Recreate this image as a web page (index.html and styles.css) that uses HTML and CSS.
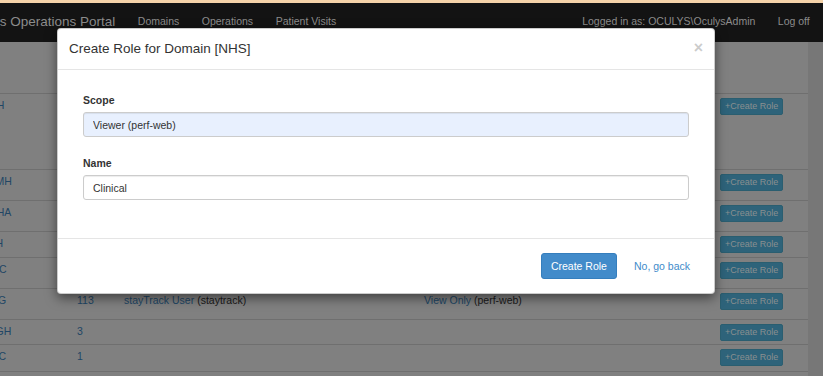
FILE: index.html
```html
<!DOCTYPE html>
<html lang="en">
<head>
    <meta charset="UTF-8">
    <meta name="viewport" content="width=device-width, initial-scale=1.0">
    <title>Oculys Operations Portal - Domains</title>
    <link rel="stylesheet" href="styles.css">
</head>
<body>

    <div class="navbar">
        <div class="navbar-inner">
            <a class="brand" href="#">Oculys Operations Portal</a>
            <nav class="nav">
                <a href="#">Domains</a>
                <a href="#">Operations</a>
                <a href="#">Patient Visits</a>
            </nav>
            <div class="nav-right">
                <span class="nav-text">Logged in as: OCULYS\OculysAdmin</span>
                <a href="#">Log off</a>
            </div>
        </div>
    </div>

    <!-- page behind the dialog, drawn in its dimmed colours -->
    <div class="content">
        <table class="domains">
            <thead>
                <tr>
                    <th class="c-name"></th>
                    <th class="c-users">Users</th>
                    <th class="c-roles">Roles</th>
                    <th class="c-scopes">Scopes</th>
                    <th class="c-act"></th>
                </tr>
            </thead>
            <tbody>
                <tr class="tall">
                    <td><a href="#">SMH</a></td>
                    <td><a href="#">27</a></td>
                    <td><a href="#">Clinical User</a> (perf-web)<br><a href="#">Bed Manager</a> (perf-web)<br><a href="#">stayTrack User</a> (staytrack)</td>
                    <td><a href="#">Viewer</a> (perf-web)<br><a href="#">View Only</a> (perf-web)</td>
                    <td><button class="btn-info">+Create Role</button></td>
                </tr>
                <tr>
                    <td><a href="#">CAMH</a></td>
                    <td><a href="#">8</a></td>
                    <td><a href="#">Clinical User</a> (perf-web)</td>
                    <td><a href="#">Viewer</a> (perf-web)</td>
                    <td><button class="btn-info">+Create Role</button></td>
                </tr>
                <tr>
                    <td><a href="#">MSHA</a></td>
                    <td><a href="#">12</a></td>
                    <td><a href="#">Clinical User</a> (perf-web)</td>
                    <td><a href="#">Viewer</a> (perf-web)</td>
                    <td><button class="btn-info">+Create Role</button></td>
                </tr>
                <tr class="short">
                    <td><a href="#">PRH</a></td>
                    <td></td>
                    <td></td>
                    <td></td>
                    <td><button class="btn-info">+Create Role</button></td>
                </tr>
                <tr>
                    <td><a href="#">HHIC</a></td>
                    <td><a href="#">5</a></td>
                    <td><a href="#">Clinical User</a> (perf-web)</td>
                    <td><a href="#">Viewer</a> (perf-web)</td>
                    <td><button class="btn-info">+Create Role</button></td>
                </tr>
                <tr>
                    <td><a href="#">WSG</a></td>
                    <td><a href="#">113</a></td>
                    <td><a href="#">stayTrack User</a> (staytrack)</td>
                    <td><a href="#">View Only</a> (perf-web)</td>
                    <td><button class="btn-info">+Create Role</button></td>
                </tr>
                <tr class="shorter">
                    <td><a href="#">NYGH</a></td>
                    <td><a href="#">3</a></td>
                    <td></td>
                    <td></td>
                    <td><button class="btn-info">+Create Role</button></td>
                </tr>
                <tr class="mid">
                    <td><a href="#">WHC</a></td>
                    <td><a href="#">1</a></td>
                    <td></td>
                    <td></td>
                    <td><button class="btn-info">+Create Role</button></td>
                </tr>
                <tr>
                    <td></td>
                    <td></td>
                    <td></td>
                    <td></td>
                    <td><button class="btn-info">+Create Role</button></td>
                </tr>
            </tbody>
        </table>
    </div>

    <div class="modal">
        <div class="modal-header">
            <h4 class="modal-title">Create Role for Domain [NHS]</h4>
            <button class="close">&times;</button>
        </div>
        <div class="modal-body">
            <div class="form-group">
                <label for="scope">Scope</label>
                <input id="scope" class="form-control autofilled" value="Viewer (perf-web)">
            </div>
            <div class="form-group">
                <label for="name">Name</label>
                <input id="name" class="form-control" value="Clinical">
            </div>
        </div>
        <div class="modal-footer">
            <button class="btn-primary">Create Role</button>
            <a href="#" class="btn-link">No, go back</a>
        </div>
    </div>

</body>
</html>
```

FILE: styles.css
```css
body {
    margin: 0;
    font-family: "Liberation Sans", Arial, sans-serif;
    font-size: 10.5px;
    line-height: 15px;
    color: #1a1a1a;
    background-color: #777;
    overflow: hidden;
}
a {
    color: #214665;
    text-decoration: none;
}

/* top bar */
.navbar {
    height: 39px;
    border-top: 3px solid #f5d3a9;
    background-color: #131313;
}
.navbar-inner {
    display: flex;
    margin-left: -46px;
    padding-right: 2px;
}
.navbar a,
.nav-text {
    color: #8c8c8c;
    padding: 11px 11.25px 0;
}
.navbar .brand {
    font-size: 13.5px;
}
.nav {
    display: flex;
}
.nav-right {
    display: flex;
    margin-left: auto;
}

/* table behind the dialog (colours already dimmed) */
.content {
    margin-left: -46px;
    width: 831px;
    height: 334px;
    overflow: hidden;
    padding-left: 23px;
    background-color: #808080;
}
.domains {
    width: 831px;
    border-spacing: 0;
    table-layout: fixed;
}
.domains thead tr { height: 51px; }
.domains th {
    text-align: left;
    vertical-align: bottom;
    padding: 0 4px 8px;
}
.c-name { width: 88px; }
.c-users { width: 39px; }
.c-roles { width: 292px; }
.c-scopes { width: 288px; }
.c-act { width: 84px; }
.domains td {
    border-top: 1px solid #6f6f6f;
    padding: 4px 4px 0;
    vertical-align: top;
    white-space: nowrap;
    overflow: hidden;
}
.domains tbody tr { height: 31px; }
.domains tr.tall { height: 76px; }
.domains tr.short { height: 26px; }
.domains tr.shorter { height: 25px; }
.domains tr.mid { height: 27px; }
.btn-info {
    font-family: inherit;
    font-size: 9px;
    line-height: 13px;
    padding: 1px 4px;
    color: #8a8f90;
    background-color: #2e637a;
    border: 1px solid #2a5e70;
    border-radius: 2px;
}

/* dialog */
.modal {
    position: absolute;
    left: 57px;
    top: 28px;
    width: 658px;
    box-sizing: border-box;
    background-color: #fff;
    border: 1px solid rgba(0,0,0,0.2);
    border-radius: 4px;
    box-shadow: 0 4px 12px rgba(0,0,0,0.5);
}
.modal-header {
    display: flex;
    align-items: flex-start;
    padding: 10px 11px 11px;
    border-bottom: 1px solid #e5e5e5;
}
.modal-title {
    margin: 0;
    font-size: 13.5px;
    font-weight: normal;
    line-height: 19px;
    color: #333;
}
.close {
    margin-left: auto;
    margin-top: 2px;
    padding: 0;
    border: 0;
    background: none;
    font-family: inherit;
    font-size: 16px;
    font-weight: bold;
    line-height: 14px;
    color: #000;
    opacity: 0.2;
}
.modal-body {
    padding: 23px 25px 38px;
}
.form-group {
    margin-bottom: 19px;
}
.form-group:last-child {
    margin-bottom: 0;
}
label {
    display: block;
    font-weight: bold;
    color: #333;
    margin-bottom: 4px;
}
.form-control {
    display: block;
    box-sizing: border-box;
    width: 100%;
    height: 25px;
    padding: 0 9px;
    font-family: inherit;
    font-size: 10.5px;
    color: #333;
    border: 1px solid #ccc;
    border-radius: 3px;
    box-shadow: inset 0 1px 1px rgba(0,0,0,0.075);
}
.form-control.autofilled {
    background-color: #e8f0fe;
}
.modal-footer {
    display: flex;
    justify-content: flex-end;
    align-items: center;
    padding: 14px 15px;
    border-top: 1px solid #e5e5e5;
}
.btn-primary {
    font-family: inherit;
    font-size: 10.5px;
    line-height: 15px;
    padding: 4.5px 9px;
    color: #fff;
    background-color: #428bca;
    border: 1px solid #357ebd;
    border-radius: 3px;
}
.modal-footer .btn-link {
    margin-left: 8px;
    padding: 0 9px;
    line-height: 26px;
    color: #428bca;
}
```
